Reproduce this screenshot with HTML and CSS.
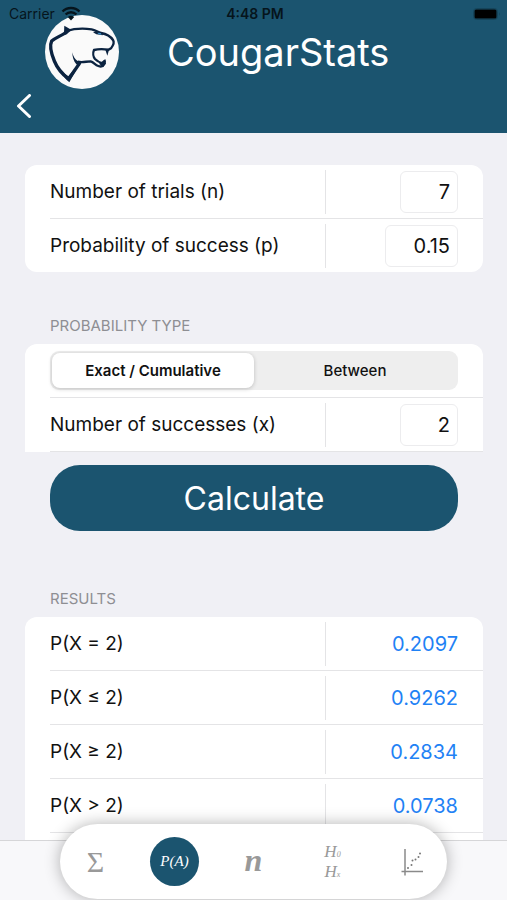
FILE: index.html
```html
<!DOCTYPE html>
<html lang="en">
<head>
    <meta charset="UTF-8">
    <meta name="viewport" content="width=device-width, initial-scale=1.0">
    <title>CougarStats</title>
    <link rel="stylesheet" href="styles.css">
</head>
<body>
    <header class="header">
        <div class="status-bar">
            <span class="carrier">Carrier
                <svg class="wifi" width="20" height="15" viewBox="0 0 20 15">
                    <path d="M1.5 5.5C6 .9 14 .9 18.500 5.500M4.600 8.500C7.600 5.500 12.400 5.500 15.400 8.500" fill="none" stroke="#06141c" stroke-width="2.400"/>
                    <path d="M6.800 11C8.600 9.200 11.400 9.200 13.200 11L10 14.500Z" fill="#06141c"/>
                </svg>
            </span>
            <span class="clock">4:48 PM</span>
            <svg class="battery" width="28" height="12" viewBox="0 0 28 12">
                <rect x=".5" y=".5" width="24" height="11" rx="3" fill="none" stroke="#15445a"/>
                <rect x="1.500" y="1.500" width="22" height="9" rx="1.500" fill="#000"/>
                <path d="M26 4v4q1.500-2 0-4" fill="#15445a"/>
            </svg>
        </div>
        <div class="brand">
            <svg class="logo" viewBox="0 0 222 222">
                <circle cx="111" cy="111" r="111" fill="#fafafa"/>
                <g fill="none" stroke="#0b2340" stroke-width="7" stroke-linejoin="round">
                    <!-- forehead and nose -->
                    <path d="M64 48C90 40 118 40 140 43C152 45 158 52 168 54C184 57 198 66 204 75C210 84 204 92 198 100L188 106"/>
                    <!-- mouth -->
                    <path d="M190 104C178 102 162 101 147 105C143 114 145 126 150 132C156 138 163 142 170 144"/>
                    <path d="M98 140C112 144 124 139 137 139C146 141 150 150 160 153C166 155 171 155 174 152L180 136"/>
                    <!-- back of the neck -->
                    <path d="M66 49C54 61 34 66 20 78C13 92 19 116 28 138C36 158 50 176 71 192" stroke-width="10"/>
                    <path d="M71 192L103 146" stroke-width="10"/>
                </g>
                <path d="M58 32L80 45L62 60L57 52Z" fill="#0b2340"/>
                <path d="M82 112C84 124 90 134 98 138L112 140L104 152L94 148C86 138 82 126 82 112Z" fill="#0b2340"/>
                <path d="M52 172L70 184L88 162L92 168L73 202C62 194 54 184 52 172Z" fill="#0b2340"/>
                <path d="M181 104L192 104L187 122Z" fill="#0b2340"/>
                <path d="M162 146L181 132L183 146L174 157Z" fill="#0b2340"/>
                <path d="M144 52L158 49L174 54L173 61L154 58Z" fill="#0b2340"/>
                <path d="M157 53l10 1 3 5-9-1z" fill="#3e91c9"/>
            </svg>
            <h1>CougarStats</h1>
        </div>
        <nav class="nav-bar">
            <a href="#" class="back" aria-label="Back">
                <svg width="16" height="24" viewBox="0 0 16 24">
                    <path d="M13.500 1.500L2.500 12L13.500 22.500" fill="none" stroke="#fff" stroke-width="3" stroke-linecap="round" stroke-linejoin="round"/>
                </svg>
            </a>
        </nav>
    </header>

    <main class="content">
        <form>
            <div class="card">
                <div class="row">
                    <label for="trials">Number of trials (n)</label>
                    <div class="value"><input type="text" id="trials" class="field" value="7"></div>
                </div>
                <div class="row">
                    <label for="prob">Probability of success (p)</label>
                    <div class="value"><input type="text" id="prob" class="field wide" value="0.15"></div>
                </div>
            </div>

            <h2>Probability type</h2>
            <div class="card open">
                <div class="row full">
                    <div class="segments">
                        <input type="radio" name="type" id="exact" checked>
                        <label for="exact">Exact / Cumulative</label>
                        <input type="radio" name="type" id="between">
                        <label for="between">Between</label>
                    </div>
                </div>
                <div class="row">
                    <label for="successes">Number of successes (x)</label>
                    <div class="value"><input type="text" id="successes" class="field" value="2"></div>
                </div>
            </div>
            <button type="button" class="calculate">Calculate</button>
        </form>

        <h2>Results</h2>
        <div class="card results">
            <div class="row">
                <span>P(X = 2)</span>
                <output class="value">0.2097</output>
            </div>
            <div class="row">
                <span>P(X ≤ 2)</span>
                <output class="value">0.9262</output>
            </div>
            <div class="row">
                <span>P(X ≥ 2)</span>
                <output class="value">0.2834</output>
            </div>
            <div class="row">
                <span>P(X &gt; 2)</span>
                <output class="value">0.0738</output>
            </div>
        </div>
    </main>

    <footer class="footer">
        <nav class="tabs">
            <a href="#" class="tab sigma">Σ</a>
            <a href="#" class="tab active">P(A)</a>
            <a href="#" class="tab sample">n</a>
            <a href="#" class="tab hypothesis"><span>H<sub>0</sub></span><span>H<sub>x</sub></span></a>
            <a href="#" class="tab" aria-label="Regression">
                <svg width="24" height="28" viewBox="0 0 24 28">
                    <path d="M5 1V27.500M1.500 23.500H23" fill="none" stroke="#8a8a8a" stroke-width="1.500"/>
                    <g fill="#777">
                        <circle cx="8" cy="20" r="1"/>
                        <circle cx="11.500" cy="17" r="1"/>
                        <circle cx="12.500" cy="12.500" r="1"/>
                        <circle cx="15.500" cy="11.500" r="1"/>
                        <circle cx="18.500" cy="9" r="1"/>
                        <circle cx="20" cy="5.500" r="1"/>
                    </g>
                </svg>
            </a>
        </nav>
    </footer>
</body>
</html>
```
FILE: styles.css
```css
* {
    box-sizing: border-box;
}
body {
    margin: 0;
    height: 100vh;
    display: flex;
    flex-direction: column;
    font-family: Inter, "Liberation Sans", sans-serif;
    font-size: 19px;
    color: #111;
    background-color: #f0f0f5;
}

/* Header */
.header {
    position: relative;
    flex: none;
    padding-top: 15px;
    background-color: #1b546f;
}
.status-bar {
    position: absolute;
    top: 0;
    left: 0;
    right: 0;
    height: 27px;
    padding: 0 6px 0 9px;
    display: grid;
    grid-template-columns: 1fr auto 1fr;
    align-items: center;
    font-size: 14px;
    color: #06141c;
}
.carrier {
    display: flex;
    align-items: center;
    gap: 6px;
}
.clock {
    font-weight: 600;
}
.battery {
    justify-self: end;
}
.brand {
    display: flex;
    align-items: center;
    gap: 48px;
    padding-left: 45px;
}
.logo {
    width: 74px;
    height: 74px;
}
h1 {
    margin: 0;
    font-size: 38px;
    font-weight: 400;
    color: #fff;
}
.nav-bar {
    height: 44px;
    padding-left: 16px;
    display: flex;
    align-items: flex-start;
}
.back {
    padding-top: 5px;
    line-height: 0;
}

/* Content */
.content {
    flex: 1;
    min-height: 0;
    overflow-y: auto;
    scrollbar-width: none;
    padding: 32px 24px 0 25px;
}
.card {
    background-color: #fff;
    border-radius: 12px;
}
.card.open {
    border-radius: 12px 12px 0 0;
}
.row {
    height: 54px;
    margin-left: 25px;
    padding-right: 25px;
    display: grid;
    grid-template-columns: 1fr 133px;
    align-items: center;
    border-bottom: 1px solid #e4e4e6;
}
.row.full {
    grid-template-columns: 1fr;
}
.card:not(.open):not(.results) .row:last-child {
    height: 53px;
    border-bottom: none;
}
.value {
    height: 44px;
    display: flex;
    align-items: center;
    justify-content: flex-end;
    border-left: 1px solid #e4e4e6;
    font-size: 20px;
}
.field {
    width: 58px;
    height: 42px;
    padding: 0 7px;
    border: 1px solid #ececee;
    border-radius: 6px;
    font: inherit;
    color: inherit;
    text-align: right;
    background-color: #fff;
}
.field.wide {
    width: 73px;
}
h2 {
    margin: 44px 25px 8px;
    font-size: 15px;
    line-height: 20px;
    font-weight: 400;
    color: #8e8e93;
    text-transform: uppercase;
}
.segments {
    height: 39px;
    padding: 2px;
    display: flex;
    border-radius: 9px;
    background-color: #eee;
}
.segments input {
    position: absolute;
    opacity: 0;
}
.segments label {
    flex: 1 1 0;
    display: flex;
    align-items: center;
    justify-content: center;
    border-radius: 8px;
    font-size: 15px;
    font-weight: 500;
}
.segments input:checked + label {
    font-weight: 600;
    background-color: #fff;
    box-shadow: 0 1px 4px rgba(0, 0, 0, 0.2);
}
.calculate {
    display: block;
    width: calc(100% - 50px);
    height: 66px;
    margin: 13px 25px 0;
    border: none;
    border-radius: 30px;
    font-family: inherit;
    font-size: 32px;
    color: #fff;
    background-color: #1b546f;
}
form + h2 {
    margin-top: 58px;
}
.results {
    padding-bottom: 54px;
}
.results .value {
    color: #1f82f5;
}

/* Bottom tabs */
.footer {
    position: relative;
    flex: none;
    height: 60px;
    border-top: 1px solid #d6d6d8;
    background-color: #f8f8fa;
}
.tabs {
    position: absolute;
    left: 60px;
    right: 60px;
    bottom: 1px;
    height: 75px;
    padding: 0 11px;
    display: flex;
    align-items: center;
    justify-content: space-between;
    border-radius: 38px;
    background-color: #fff;
    box-shadow: 0 0 16px rgba(0, 0, 0, 0.3);
}
.tab {
    width: 49px;
    height: 49px;
    display: flex;
    align-items: center;
    justify-content: center;
    border-radius: 50%;
    font-family: "Liberation Serif", serif;
    color: #999;
    text-decoration: none;
}
.tab.active {
    font-size: 15px;
    font-style: italic;
    color: #fff;
    background-color: #1b546f;
}
.sigma {
    font-size: 30px;
}
.sample {
    font-size: 32px;
    line-height: 32px;
    font-style: italic;
    font-weight: 700;
    padding-bottom: 4px;
}
.hypothesis {
    flex-direction: column;
    font-size: 17px;
    line-height: 20px;
    font-style: italic;
}
.hypothesis sub {
    font-size: 8px;
    line-height: 0;
    vertical-align: baseline;
}
```
